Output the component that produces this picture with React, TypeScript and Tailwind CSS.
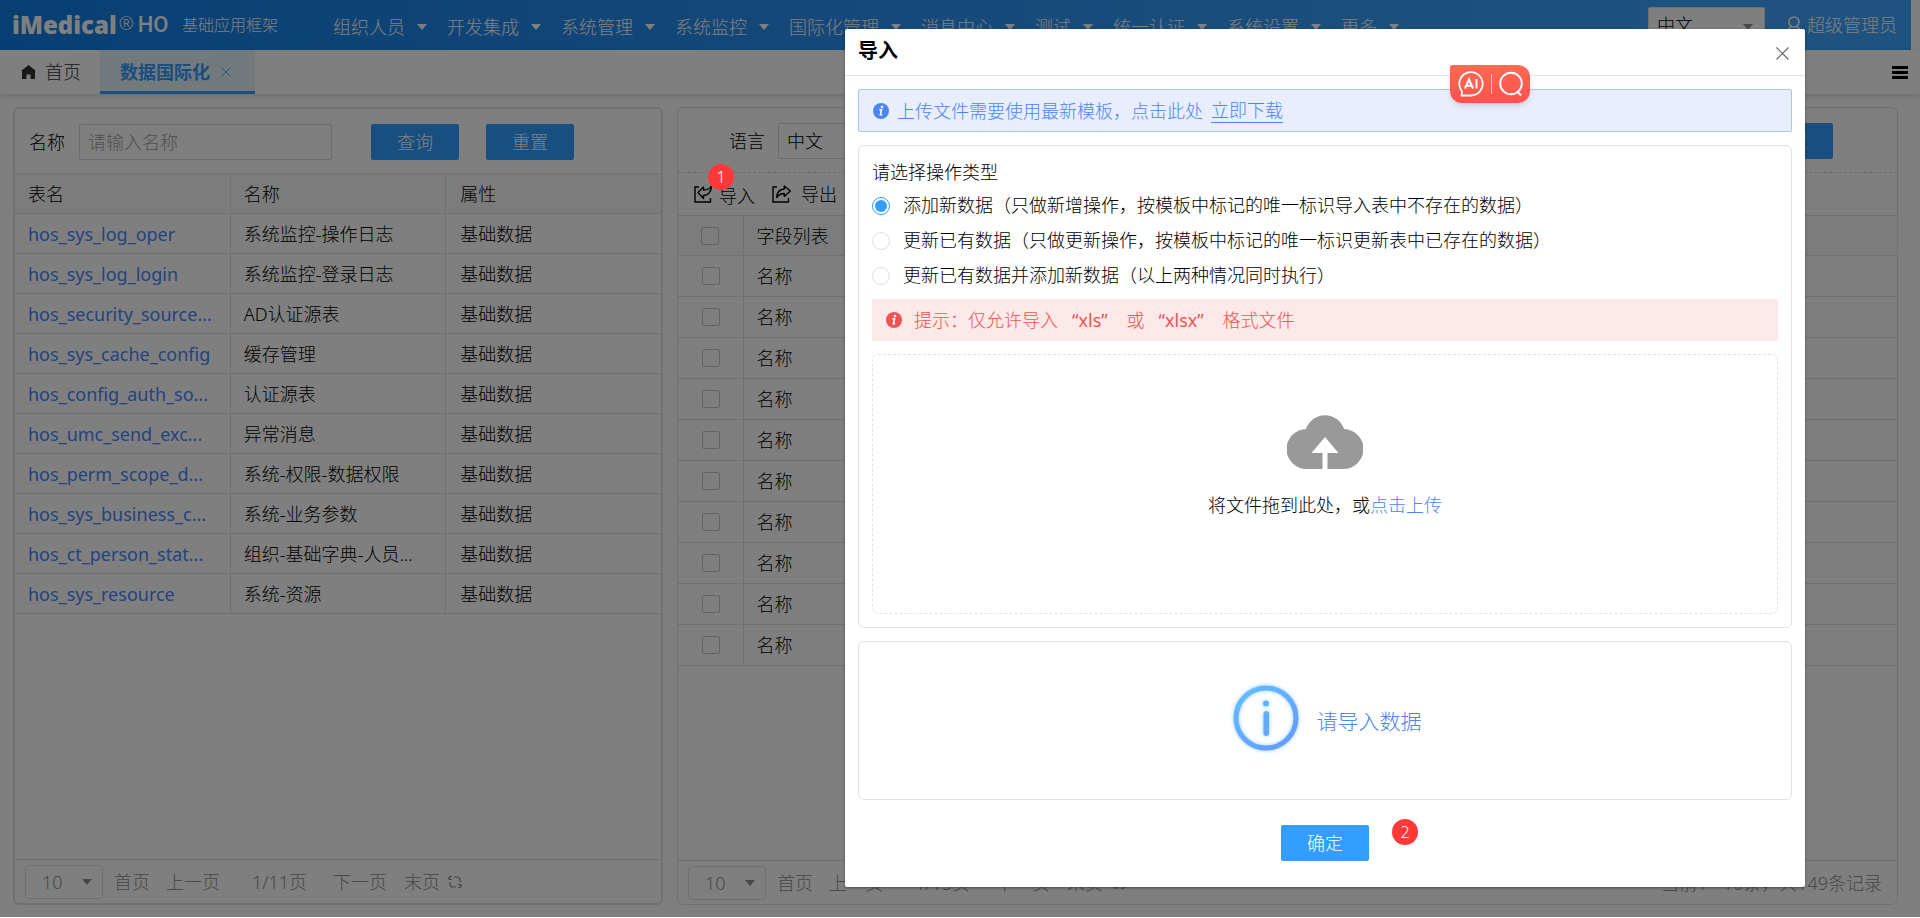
import { useState } from "react";

const menus = ["组织人员", "开发集成", "系统管理", "系统监控", "国际化管理", "消息中心", "测试", "统一认证", "系统设置", "更多"];

const tables = [
  { code: "hos_sys_log_oper", name: "系统监控-操作日志" },
  { code: "hos_sys_log_login", name: "系统监控-登录日志" },
  { code: "hos_security_source...", name: "AD认证源表" },
  { code: "hos_sys_cache_config", name: "缓存管理" },
  { code: "hos_config_auth_so...", name: "认证源表" },
  { code: "hos_umc_send_exc...", name: "异常消息" },
  { code: "hos_perm_scope_d...", name: "系统-权限-数据权限" },
  { code: "hos_sys_business_c...", name: "系统-业务参数" },
  { code: "hos_ct_person_stat...", name: "组织-基础字典-人员..." },
  { code: "hos_sys_resource", name: "系统-资源" },
];

const modes = [
  "添加新数据（只做新增操作，按模板中标记的唯一标识导入表中不存在的数据）",
  "更新已有数据（只做更新操作，按模板中标记的唯一标识更新表中已存在的数据）",
  "更新已有数据并添加新数据（以上两种情况同时执行）",
];

function Caret({ className = "" }: { className?: string }) {
  return (
    <svg className={className} width="10" height="6" viewBox="0 0 10 6" fill="currentColor" aria-hidden="true">
      <path d="M0 0h10L5 6z" />
    </svg>
  );
}

function InfoDot({ className }: { className: string }) {
  return (
    <svg className={className} width="16" height="16" viewBox="0 0 16 16" aria-hidden="true">
      <circle cx="8" cy="8" r="8" fill="currentColor" />
      <circle cx="9" cy="4" r="1.3" fill="#fff" />
      <path d="M6.3 6.8h2.2l-1.1 5h1.8" fill="none" stroke="#fff" strokeWidth="1.6" />
    </svg>
  );
}

function Close({ size, className = "" }: { size: number; className?: string }) {
  return (
    <svg className={className} width={size} height={size} viewBox="0 0 13 13" fill="none" stroke="currentColor" strokeWidth="1.2" aria-hidden="true">
      <path d="M.5 .5l12 12M12.5 .5l-12 12" />
    </svg>
  );
}

function ShareIcon({ flip = false }: { flip?: boolean }) {
  return (
    <svg width="19" height="18" viewBox="0 0 19 18" fill="none" stroke="currentColor" strokeWidth="1.4" aria-hidden="true">
      <path d="M5 2H1v15h15.5v-4" />
      {flip ? (
        <path d="M4 7.5L9.5 2v3c3.500 0 6.500-1 8-4 0 5-3 9.500-8 9.500v3z" strokeLinejoin="round" />
      ) : (
        <path d="M18.3 6l-6-5v3C8 4.3 5 7.3 4.7 12.5 7 9.5 9.3 8.500 12.3 8.500v3z" strokeLinejoin="round" />
      )}
    </svg>
  );
}

function Button({ children }: { children: string }) {
  return <button className="h-9 w-[88px] rounded-xs bg-[#339eff] text-white">{children}</button>;
}

function Pager({ pages, info }: { pages: string; info?: string }) {
  return (
    <div className="flex h-11 items-center border-t border-[#e2e2e2] pl-2.5 pr-[15px] text-[#909090]">
      <div className="relative mr-[11px]">
        <select aria-label="每页条数" className="h-[34px] w-[78px] appearance-none rounded border border-[#e2e2e2] pl-4">
          <option>10</option>
        </select>
        <Caret className="pointer-events-none absolute right-[11px] top-[14px]" />
      </div>
      <button className="mr-4">首页</button>
      <button className="mr-8">上一页</button>
      <span className="mr-[26px]">{pages}</span>
      <button className="mr-[17px]">下一页</button>
      <button className="mr-2">末页</button>
      <button aria-label="刷新">
        <svg width="14" height="14" viewBox="0 0 14 14" fill="none" stroke="currentColor" strokeWidth="1.2">
          <path d="M6 2h3q3 0 3 3v2M8 12H5q-3 0-3-3V7M1 4.500q0-3 3-3.500M1 1.500v3h3M13 9.500q0 3-3 3.500M13 12.500v-3h-3" />
        </svg>
      </button>
      {info && <span className="ml-auto">{info}</span>}
    </div>
  );
}

function TopBar() {
  return (
    <header className="mr-[9px] flex h-[50px] shrink-0 items-center bg-linear-to-r from-[#107ee6] to-[#3ea5ff] to-90% pl-3 pr-[14px] text-white">
      <div className="flex w-[168px] shrink-0 items-center whitespace-nowrap">
        <span className="font-['Open_Sans'] text-2xl leading-6 font-extrabold">iMedical</span>
        <span className="ml-0.5 self-start text-lg leading-5">®</span>
        <span className="ml-1 font-['Roboto'] text-[22px] leading-6 font-medium">HO</span>
      </div>
      <span className="w-[153px] shrink-0 pl-0.5 text-base whitespace-nowrap">基础应用框架</span>
      <nav className="flex shrink-0 gap-5 pt-1">
        {menus.map((m) => (
          <button key={m} className="flex items-center gap-3 whitespace-nowrap">
            {m}
            <Caret />
          </button>
        ))}
      </nav>
      <div className="relative ml-auto">
        <select aria-label="系统语言" className="h-9 w-[117px] appearance-none rounded-xs border border-[#e2e2e2] bg-white pl-2 text-black">
          <option>中文</option>
        </select>
        <Caret className="pointer-events-none absolute right-3 top-[17px] text-[#909090]" />
      </div>
      <button className="ml-[22px] flex items-center gap-1.5 whitespace-nowrap">
        <svg width="14" height="18" viewBox="0 0 14 18" fill="none" stroke="currentColor" strokeWidth="1.7" aria-hidden="true">
          <circle cx="7" cy="6" r="5" />
          <path d="M1 16q0-4.5 4-5.5M13 16q0-4.5-4-5.5" />
        </svg>
        超级管理员
      </button>
    </header>
  );
}

function TabBar() {
  return (
    <div className="flex h-11 shrink-0 items-center bg-white shadow-[0_2px_6px_rgba(0,0,0,0.15)]">
      <a href="#home" className="flex w-[100px] items-center gap-[9px] pl-[21px] text-[#333]">
        <svg width="15" height="14" viewBox="0 0 15 14" fill="currentColor" aria-hidden="true">
          <path d="M7.5 0L15 6h-1v8H9.5V9.5h-4V14H1V6H0z" />
        </svg>
        首页
      </a>
      <a href="#i18n" className="flex h-full w-[155px] items-center gap-[11px] border-b-3 border-[#339eff] bg-[#e6f5fb] pt-0.5 pl-5 font-bold text-[#339eff]">
        数据国际化
        <Close size={10} />
      </a>
      <button aria-label="菜单" className="ml-auto mr-3 text-black">
        <svg width="16" height="13" viewBox="0 0 16 13" fill="currentColor">
          <path d="M0 0h16v3H0zM0 5h16v3H0zM0 10h16v3H0z" />
        </svg>
      </button>
    </div>
  );
}

function TablePanel() {
  return (
    <section className="flex min-w-0 flex-col rounded-md border-2 border-[#e2e2e2]">
      <div className="flex h-16 shrink-0 items-center pt-0.5 pl-[14px]">
        <label htmlFor="table-name">名称</label>
        <input id="table-name" placeholder="请输入名称" className="ml-[14px] mr-[39px] h-9 w-[253px] rounded-xs border border-[#d8d8d8] px-2 placeholder:text-[#a0a0a0]" />
        <Button>查询</Button>
        <div className="w-[27px]" />
        <Button>重置</Button>
      </div>
      <table className="w-full table-fixed border-collapse text-left">
        <thead>
          <tr className="h-10 border-y border-[#e2e2e2] bg-[#f9f9f9]">
            <th className="border-r border-[#e2e2e2] pl-[13px] font-light">表名</th>
            <th className="border-r border-[#e2e2e2] pl-[13px] font-light">名称</th>
            <th className="pl-[14px] font-light">属性</th>
          </tr>
        </thead>
        <tbody>
          {tables.map((t) => (
            <tr key={t.code} className="h-10 border-b border-[#e2e2e2]">
              <td className="border-r border-[#e2e2e2] pl-[13px] whitespace-nowrap">
                <a href={`#${t.code}`} className="font-normal text-[#4a86ff]">{t.code}</a>
              </td>
              <td className="border-r border-[#e2e2e2] pl-[13px] whitespace-nowrap">{t.name}</td>
              <td className="pl-[14px]">基础数据</td>
            </tr>
          ))}
        </tbody>
      </table>
      <div className="mt-auto">
        <Pager pages="1/11页" />
      </div>
    </section>
  );
}

function FieldPanel() {
  return (
    <section className="flex min-w-0 flex-col rounded-md border border-[#e2e2e2]">
      <div className="flex h-[65px] shrink-0 items-center border-b border-dashed border-[#d8d8d8] pl-[51px] pr-16 pt-0.5">
        <label htmlFor="lang">语言</label>
        <select id="lang" className="ml-[13px] h-9 w-[253px] appearance-none rounded-xs border border-[#d8d8d8] pl-2">
          <option>中文</option>
        </select>
        <div className="ml-auto">
          <Button>重置</Button>
        </div>
      </div>
      <div className="flex h-[42px] shrink-0 items-center gap-[17px] pl-4">
        <button className="relative flex items-center gap-1.5">
          <ShareIcon flip />
          <span className="pt-1">导入</span>
          <span className="absolute -top-4 left-[14px] z-20 flex size-[26px] items-center justify-center rounded-full bg-[#ff3838] text-base text-white">1</span>
        </button>
        <button className="flex items-center gap-2.5">
          <ShareIcon />
          导出
        </button>
      </div>
      <table className="w-full border-collapse text-left">
        <thead>
          <tr className="h-10 border-y border-[#e2e2e2] bg-[#f9f9f9]">
            <th className="w-[65px] border-r border-[#e2e2e2] pl-[23px]">
              <input type="checkbox" aria-label="全选" className="block size-[18px] appearance-none rounded-xs border border-[#c8c8c8]" />
            </th>
            <th className="pl-[13px] font-light">字段列表</th>
          </tr>
        </thead>
        <tbody>
          {tables.map((t) => (
            <tr key={t.code} className="h-[41px] border-b border-[#e2e2e2]">
              <td className="border-r border-[#e2e2e2] pl-6">
                <input type="checkbox" aria-label="选择" className="block size-[18px] appearance-none rounded-xs border border-[#c8c8c8]" />
              </td>
              <td className="pl-[13px]">名称</td>
            </tr>
          ))}
        </tbody>
      </table>
      <div className="mt-auto">
        <Pager pages="1/15页" info="当前1 - 10条，共149条记录" />
      </div>
    </section>
  );
}

function AssistWidget() {
  return (
    <div className="absolute right-[275px] top-9 flex h-[38px] w-20 items-center justify-center gap-[7px] rounded-xl rounded-tl-xs bg-linear-to-b from-[#ff6a52] to-[#ff514e] shadow-md">
      <button aria-label="AI">
        <svg width="26" height="26" viewBox="0 0 26 26" fill="none" stroke="#fff" strokeWidth="1.8">
          <path d="M3.5 24.5H13A11.7 11.7 0 1 0 4 20.3z" strokeLinejoin="round" />
          <path d="M7 17.5L11 8.5l4 9M8.4 14.8h5.2M18.5 8v9.5" strokeWidth="2" />
        </svg>
      </button>
      <div className="h-5 w-px bg-white/70" />
      <button aria-label="搜索">
        <svg width="24" height="26" viewBox="0 0 24 26" fill="none" stroke="#fff" strokeWidth="1.9">
          <circle cx="12" cy="12.5" r="10.8" />
          <path d="M18 20l4 4.5" />
        </svg>
      </button>
    </div>
  );
}

function ImportDialog() {
  const [mode, setMode] = useState(0);

  return (
    <div role="dialog" aria-label="导入" className="relative w-[50vw] rounded-xs bg-white shadow-[0_1px_3px_rgba(0,0,0,0.4)]">
      <div className="flex h-[47px] justify-between border-b border-[#e6e6e6] pl-[13px] pr-4">
        <h2 className="pt-2 text-xl leading-7 font-bold">导入</h2>
        <button aria-label="关闭" className="pt-0.5 text-[#666]">
          <Close size={13} />
        </button>
      </div>

      <div className="space-y-[13px] px-[13px] pt-[13px]">
        <div className="flex h-[43px] items-center rounded-xs border border-[#a8c5fd] bg-[#e8eefd] pl-[14px] text-[#4a86f8]">
          <InfoDot className="mr-2 text-[#4a86f8]" />
          上传文件需要使用最新模板，点击此处
          <a href="#template" className="ml-2 border-b border-[#4a86f8] leading-6">立即下载</a>
        </div>

        <div className="rounded-md border border-[#e2e2e2] p-[13px]">
          <fieldset className="leading-[27px]">
            <legend className="mb-0.5">请选择操作类型</legend>
            {modes.map((m, i) => (
              <label key={m} className="flex h-[35px] items-center gap-[13px]">
                <input
                  type="radio"
                  name="mode"
                  checked={mode === i}
                  onChange={() => setMode(i)}
                  className="size-[18px] shrink-0 appearance-none rounded-full border border-[#dcdfe6] bg-clip-content p-0.5 checked:border-[#339eff] checked:bg-[#339eff]"
                />
                {m}
              </label>
            ))}
          </fieldset>
          <div className="mt-1.5 flex h-[42px] items-center rounded-xs bg-[#fde9e9] pl-[14px] whitespace-pre text-[#f15352]">
            <InfoDot className="mr-3 text-[#f15352]" />
            提示：仅允许导入   <span className="font-normal">“xls”</span>    或   <span className="font-normal">“xlsx”</span>    格式文件
          </div>
          <div className="mt-[13px] flex h-[260px] flex-col items-center rounded-md border border-dashed border-[#e0e3ea] pt-[57px]">
            <svg width="76" height="57" viewBox="0 0 76 57" aria-hidden="true">
              <path d="M20 57a20 20 0 0 1-1-40A20 20 0 0 1 57 17a20 20 0 0 1-1 40z" fill="#999" />
              <path d="M38 25l13.5 16h-11v16h-5V41h-11z" fill="#fff" />
            </svg>
            <p className="mt-6">
              将文件拖到此处，或<button className="text-[#4a86f8]">点击上传</button>
            </p>
          </div>
        </div>

        <div className="flex h-[159px] items-center justify-center gap-[14px] rounded-md border border-[#e2e2e2] text-[21px] text-[#4a86f8]">
          <svg width="74" height="74" viewBox="0 0 74 74" fill="none" className="drop-shadow-[0_0_2px_#8ecbff]" aria-hidden="true">
            <defs>
              <linearGradient id="ring" x1="10" y1="8" x2="58" y2="66" gradientUnits="userSpaceOnUse">
                <stop stopColor="#62bdfd" />
                <stop offset="1" stopColor="#6699fd" />
              </linearGradient>
            </defs>
            <circle cx="37" cy="34" r="30" stroke="url(#ring)" strokeWidth="5" />
            <circle cx="37" cy="19.5" r="3" fill="#5fb4fd" />
            <rect x="34.5" y="27" width="5.5" height="25" rx="2.7" fill="url(#ring)" />
          </svg>
          请导入数据
        </div>
      </div>

      <div className="relative flex h-[87px] items-start justify-center pt-[25px]">
        <Button>确定</Button>
        <span className="absolute left-[547px] top-[19px] flex size-[26px] items-center justify-center rounded-full bg-[#ff3838] text-base text-white">2</span>
      </div>
      <AssistWidget />
    </div>
  );
}

export default function App() {
  return (
    <div className="relative flex h-screen flex-col bg-white font-['Noto_Sans','Noto_Sans_CJK_SC',sans-serif] text-lg leading-6 font-light text-black">
      <TopBar />
      <TabBar />
      <main className="grid min-h-0 flex-1 grid-cols-[650fr_1221fr] gap-[14px] pb-[13px] pl-[13px] pr-[22px] pt-[13px]">
        <TablePanel />
        <FieldPanel />
      </main>
      <div className="absolute inset-x-0 bottom-px top-0 z-10 flex items-start justify-end bg-black/50 pr-[115px] pt-[29px]">
        <ImportDialog />
      </div>
    </div>
  );
}
